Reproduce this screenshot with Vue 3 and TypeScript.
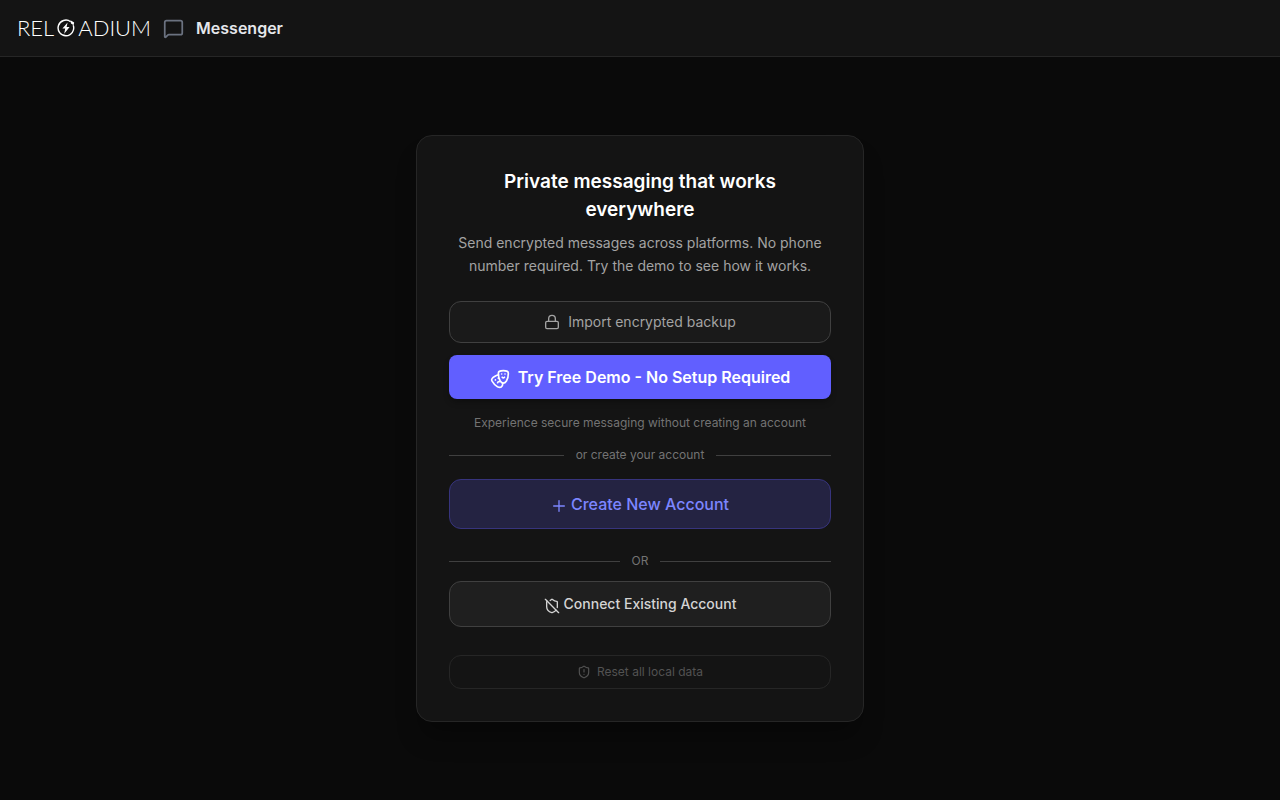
<script setup lang="ts">
const appName: string = 'Messenger'
</script>

<template>
  <div class="page">
    <header class="topbar">
      <div class="logo" role="img" aria-label="Reloadium">
        <span>REL</span>
        <svg class="bolt" viewBox="0 0 18 18" aria-hidden="true">
          <path d="M16.2 6.2A7.8 7.8 0 1 1 13.6 2.7" fill="none" stroke="currentColor" stroke-width="1.4" />
          <path d="M13.4 1.2 17.2 3.4 16.6 6.2 14 4.6z" fill="currentColor" />
          <path d="M10.6 3.4 5.4 9.6h2.8l-1 5.2 5.4-6.8H9.6z" fill="currentColor" />
        </svg>
        <span>ADIUM</span>
      </div>
      <svg class="icon chat" viewBox="0 0 24 24" aria-hidden="true">
        <path d="M22 17a2 2 0 0 1-2 2H6.828a2 2 0 0 0-1.414.586l-2.202 2.202A.71.71 0 0 1 2 21.286V5a2 2 0 0 1 2-2h16a2 2 0 0 1 2 2z" />
      </svg>
      <span class="title">{{ appName }}</span>
    </header>

    <main class="stage">
      <section class="card">
        <h1>Private messaging that works everywhere</h1>
        <p class="lead">
          Send encrypted messages across platforms. No phone number required. Try the demo to see how it works.
        </p>

        <button type="button" class="btn import">
          <svg class="icon" viewBox="0 0 24 24" aria-hidden="true">
            <rect x="2.5" y="11" width="19" height="11" rx="2" />
            <path d="M7 11V7a5 5 0 0 1 10 0v4" />
          </svg>
          <span>Import encrypted backup</span>
        </button>

        <button type="button" class="btn demo">
          <svg class="icon low" viewBox="0 0 24 24" aria-hidden="true">
            <path d="M10 11h.01" />
            <path d="M14 6h.01" />
            <path d="M18 6h.01" />
            <path d="M6.5 13.1h.01" />
            <path d="M22 5c0 9-4 12-6 12s-6-3-6-12c0-2 2-3 6-3s6 1 6 3" />
            <path d="M17.4 9.9c-.8.8-2 .8-2.8 0" />
            <path d="M10.1 7.1C9 7.2 7.7 7.7 6 8.6c-3.5 2-4.7 3.9-3.7 5.6 4.5 7.8 9.5 8.4 11.2 7.4.9-.5 1.9-2.1 1.9-4.7" />
            <path d="M9.1 16.5c.3-1.1 1.4-1.7 2.4-1.4" />
          </svg>
          <span>Try Free Demo - No Setup Required</span>
        </button>
        <p class="caption">Experience secure messaging without creating an account</p>

        <div class="divider"><span>or create your account</span></div>

        <button type="button" class="btn create">
          <svg class="icon low" viewBox="0 0 24 24" aria-hidden="true">
            <path d="M4 12h16" />
            <path d="M12 4v16" />
          </svg>
          <span>Create New Account</span>
        </button>

        <div class="divider or"><span>OR</span></div>

        <button type="button" class="btn connect">
          <svg class="icon low" viewBox="0 0 24 24" aria-hidden="true">
            <path d="m2 2 20 20" />
            <path d="M5 5a1 1 0 0 0-1 1v7c0 5 3.5 7.5 7.67 8.94a1 1 0 0 0 .67.01c2.35-.82 4.48-1.97 5.9-3.71" />
            <path d="M9.309 3.652A12.252 12.252 0 0 0 11.24 2.28a1.17 1.17 0 0 1 1.52 0C14.51 3.81 17 5 19 5a1 1 0 0 1 1 1v7a9.784 9.784 0 0 1-.08 1.264" />
          </svg>
          <span>Connect Existing Account</span>
        </button>

        <button type="button" class="btn reset">
          <svg class="icon" viewBox="0 0 24 24" aria-hidden="true">
            <path d="M20 13c0 5-3.5 7.5-7.66 8.95a1 1 0 0 1-.67-.01C7.5 20.5 4 18 4 13V6a1 1 0 0 1 1-1c2 0 4.5-1.2 6.24-2.72a1.17 1.17 0 0 1 1.52 0C14.51 3.81 17 5 19 5a1 1 0 0 1 1 1z" />
            <path d="M12 8v4" />
            <path d="M12 16h.01" />
          </svg>
          <span>Reset all local data</span>
        </button>
      </section>
    </main>
  </div>
</template>

<style>
body {
  margin: 0;
  background: #0a0a0a;
}
</style>

<style scoped>
.page {
  min-height: 100vh;
  display: flex;
  flex-direction: column;
  background: #0a0a0a;
  color: #fff;
  font-family: Inter, "Liberation Sans", sans-serif;
}

.topbar {
  display: flex;
  align-items: center;
  gap: 12px;
  height: 56px;
  padding: 0 17px;
  background: #141414;
  border-bottom: 1px solid #262626;
}

.logo {
  display: flex;
  align-items: center;
  gap: 3px;
  font-family: Lato, sans-serif;
  font-size: 22px;
  font-weight: 300;
  line-height: 24px;
}

.bolt {
  width: 18px;
  height: 18px;
}

.icon {
  flex: none;
  width: 16px;
  height: 16px;
  fill: none;
  stroke: currentColor;
  stroke-width: 2;
  stroke-linecap: round;
  stroke-linejoin: round;
}

.low {
  margin-top: 3px;
}

.chat {
  width: 21px;
  height: 21px;
  color: #6b7280;
}

.title {
  font-size: 16px;
  font-weight: 600;
  line-height: 24px;
  color: #e5e7eb;
}

.stage {
  flex: 1;
  display: flex;
  align-items: center;
  justify-content: center;
  padding: 16px;
}

.card {
  box-sizing: border-box;
  width: 100%;
  max-width: 448px;
  padding: 32px;
  display: flex;
  flex-direction: column;
  background: #141414;
  border: 1px solid #262626;
  border-radius: 16px;
  box-shadow: 0 20px 25px -5px rgba(0, 0, 0, 0.3);
  text-align: center;
}

h1 {
  margin: 0 0 7px;
  font-size: 19px;
  font-weight: 600;
  line-height: 28px;
}

.lead {
  margin: 0 0 24px;
  font-size: 14px;
  line-height: 23px;
  color: #a3a3a3;
}

.btn {
  box-sizing: border-box;
  display: flex;
  align-items: center;
  justify-content: center;
  gap: 8px;
  width: 100%;
  padding: 8px 16px;
  border: 1px solid transparent;
  border-radius: 12px;
  font: inherit;
  line-height: 20px;
  cursor: pointer;
}

.import {
  min-height: 42px;
  margin-bottom: 12px;
  background: #1a1a1a;
  border-color: #404040;
  color: #a3a3a3;
  font-size: 14px;
}

.demo {
  min-height: 44px;
  margin-bottom: 14px;
  background: #615fff;
  border-radius: 8px;
  color: #fff;
  font-size: 16px;
  font-weight: 600;
  box-shadow: 0 4px 6px -1px rgba(0, 0, 0, 0.3);
}

.demo .icon {
  width: 20px;
  height: 20px;
}

.caption {
  margin: 0 0 12px;
  font-size: 12px;
  line-height: 20px;
  color: #737373;
}

.divider {
  display: flex;
  align-items: center;
  gap: 12px;
  margin-bottom: 14px;
  font-size: 12px;
  line-height: 20px;
  color: #737373;
}

.divider::before,
.divider::after {
  content: "";
  flex: 1;
  height: 1px;
  background: #404040;
}

.create {
  gap: 4px;
  min-height: 50px;
  margin-bottom: 22px;
  background: #242342;
  border-color: #37347d;
  color: #7c86ff;
  font-size: 16px;
  font-weight: 500;
}

.or {
  margin-bottom: 10px;
}

.connect {
  gap: 4px;
  min-height: 46px;
  margin-bottom: 28px;
  background: #1f1f1f;
  border-color: #404040;
  color: #d4d4d4;
  font-size: 14px;
  font-weight: 500;
}

.reset {
  gap: 6px;
  min-height: 34px;
  padding: 6px 16px;
  background: transparent;
  border-color: #262626;
  color: #525252;
  font-size: 12px;
}

.reset .icon {
  width: 14px;
  height: 14px;
}
</style>
